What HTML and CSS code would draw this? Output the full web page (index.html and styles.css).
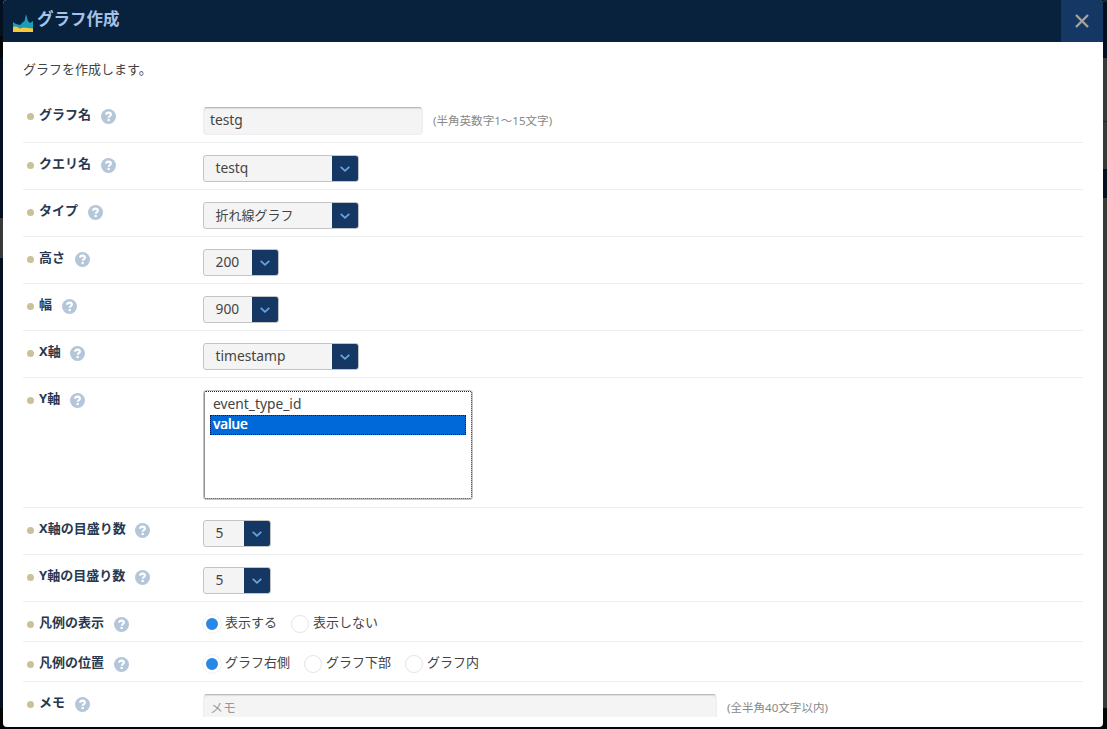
FILE: index.html
```
<!DOCTYPE html>
<html lang="ja">
<head>
<meta charset="utf-8">
<title>グラフ作成</title>
<link rel="stylesheet" href="styles.css">
</head>
<body>
<svg class="defs" width="0" height="0">
  <symbol id="help" viewBox="0 0 15 15">
    <circle cx="7.5" cy="7.5" r="7.5" fill="#b4c6da"/>
    <path d="M5.1 5.7C5.2 4.3 6.1 3.6 7.5 3.6c1.5 0 2.4.8 2.4 2 0 1.5-2.2 1.6-2.2 3.2" fill="none" stroke="#fff" stroke-width="2.100"/>
    <rect x="6.500" y="9.900" width="2.300" height="2.200" fill="#fff"/>
  </symbol>
  <symbol id="chev" viewBox="0 0 12 8">
    <path d="M1.700 1.800L6 5.800l4.300-4" fill="none" stroke="#66a5e2" stroke-width="1.800"/>
  </symbol>
</svg>
<div class="modal">
  <header class="head">
    <svg class="logo" width="20" height="18" viewBox="0 0 20 18">
      <path d="M0 8l3 2 4 1 3-3 1.500-1L13 0l2 7 2 2 3-2v11H0z" fill="#1a9dbd"/>
      <path d="M0 13l3-.5 4 2 4-1 4 .5 5 .5V18H0z" fill="#f7c93b"/>
    </svg>
    <h1 class="title">グラフ作成</h1>
    <button class="close"><svg width="14" height="14" viewBox="0 0 14 14"><path d="M1 1l12 12M13 1L1 13" stroke="#a7a29c" stroke-width="2.400"/></svg></button>
  </header>
  <main class="content">
    <p class="intro">グラフを作成します。</p>
    <div class="row row-name"><div class="label"><i class="dot"></i><span>グラフ名</span><svg class="help"><use href="#help"/></svg></div>
      <div class="field"><div class="input latin">testg</div><span class="note">(半角英数字1〜15文字)</span></div></div>
    <div class="row"><div class="label"><i class="dot"></i><span>クエリ名</span><svg class="help"><use href="#help"/></svg></div>
      <div class="select wide latin"><span>testq</span><b><svg class="chev"><use href="#chev"/></svg></b></div></div>
    <div class="row"><div class="label"><i class="dot"></i><span>タイプ</span><svg class="help"><use href="#help"/></svg></div>
      <div class="select wide"><span>折れ線グラフ</span><b><svg class="chev"><use href="#chev"/></svg></b></div></div>
    <div class="row"><div class="label"><i class="dot"></i><span>高さ</span><svg class="help"><use href="#help"/></svg></div>
      <div class="select size latin"><span>200</span><b><svg class="chev"><use href="#chev"/></svg></b></div></div>
    <div class="row"><div class="label"><i class="dot"></i><span>幅</span><svg class="help"><use href="#help"/></svg></div>
      <div class="select size latin"><span>900</span><b><svg class="chev"><use href="#chev"/></svg></b></div></div>
    <div class="row"><div class="label"><i class="dot"></i><span>X軸</span><svg class="help"><use href="#help"/></svg></div>
      <div class="select wide latin"><span>timestamp</span><b><svg class="chev"><use href="#chev"/></svg></b></div></div>
    <div class="row row-list"><div class="label"><i class="dot"></i><span>Y軸</span><svg class="help"><use href="#help"/></svg></div>
      <div class="listbox latin"><div class="option">event_type_id</div><div class="option selected">value</div></div></div>
    <div class="row"><div class="label"><i class="dot"></i><span>X軸の目盛り数</span><svg class="help"><use href="#help"/></svg></div>
      <div class="select tick latin"><span>5</span><b><svg class="chev"><use href="#chev"/></svg></b></div></div>
    <div class="row"><div class="label"><i class="dot"></i><span>Y軸の目盛り数</span><svg class="help"><use href="#help"/></svg></div>
      <div class="select tick latin"><span>5</span><b><svg class="chev"><use href="#chev"/></svg></b></div></div>
    <div class="row row-radio"><div class="label"><i class="dot"></i><span>凡例の表示</span><svg class="help"><use href="#help"/></svg></div>
      <div class="radios"><label><i class="radio on"></i>表示する</label><label><i class="radio"></i>表示しない</label></div></div>
    <div class="row row-radio"><div class="label"><i class="dot"></i><span>凡例の位置</span><svg class="help"><use href="#help"/></svg></div>
      <div class="radios"><label><i class="radio on"></i>グラフ右側</label><label><i class="radio"></i>グラフ下部</label><label><i class="radio"></i>グラフ内</label></div></div>
    <div class="row"><div class="label"><i class="dot"></i><span>メモ</span><svg class="help"><use href="#help"/></svg></div>
      <div class="field"><div class="input memo">メモ</div><span class="note">(全半角40文字以内)</span></div></div>
  </main>
</div>
</body>
</html>
```
FILE: styles.css
```
* { box-sizing: border-box; }
html, body { height: 729px; overflow: hidden; }
body {
  margin: 0;
  padding: 0 4px 2px 3px;
  font: 13px/20px "Noto Sans", "Noto Sans CJK JP", sans-serif;
  color: #444;
  background:
    linear-gradient(#222 0 2px, #04101f 2px 58px, #393939 58px 121px, #222 121px 122px, #393939 122px 169px, #04101f 169px 198px, #393939 198px 708px, #050505 708px) right / 4px 100% no-repeat,
    linear-gradient(#04101f 0 36px, #050505 36px 58px, #04101f 58px 218px, #393939 218px 258px, #04101f 258px 708px, #050505 708px) left / 3px 100% no-repeat,
    #060606;
}
.defs { position: absolute; }
.modal { height: 727px; display: flex; flex-direction: column; background: #fff; border-radius: 4px; overflow: hidden; }
.head { flex: none; height: 42px; display: flex; align-items: flex-start; background: #08213d; }
.logo { margin: 14px 0 0 10px; }
.title { flex: 1; margin: 8px 0 0 4px; font-size: 16.500px; line-height: 22px; font-weight: bold; color: #a3c3e8; }
.close { width: 42px; height: 42px; padding: 0; border: 0; background: #143863; display: flex; align-items: center; justify-content: center; }
.content { flex: none; height: 675px; padding: 0 20px; overflow: hidden; }
.intro { margin: 17px 0 15px; }
.row { display: flex; align-items: flex-start; height: 47px; border-bottom: 1px solid #ebeff2; }
.row-name { height: 49px; }
.row-list { height: 130px; }
.row-radio { height: 40px; }
.label { width: 180px; height: 20px; margin-top: 10px; padding-left: 4px; display: flex; align-items: center; color: #283850; font-weight: bold; }
.dot { width: 7px; height: 7px; margin: 4px 5px 0 0; border-radius: 50%; background: #c8c296; }
.help { width: 15px; height: 15px; margin: 4px 0 0 9.500px; }
.field { display: flex; margin-top: 12px; }
.row-name .field { margin-top: 13px; }
.latin { font-size: 13.800px; }
.input { width: 220px; height: 28px; padding: 2px 6px; border: 1px solid #eee; border-top-color: #bbb; border-radius: 4px; background: #f4f4f4; box-shadow: inset 0 1px 1px #ddd; }
.memo { width: 514px; color: #999; }
.note { margin: 4px 0 0 10px; font-size: 11.550px; color: #888; }
.select { height: 27px; margin-top: 12px; display: flex; border: 1px solid #c4c4c4; border-radius: 3px; background: #f4f4f4; overflow: hidden; }
.select span { flex: 1; padding: 2px 0 0 11.500px; white-space: nowrap; }
.select b { width: 26px; background: #143863; display: flex; align-items: center; justify-content: center; }
.chev { width: 12px; height: 8px; margin-top: 1px; }
.wide { width: 156px; }
.size { width: 76px; }
.tick { width: 68px; }
.listbox { width: 270px; height: 110px; margin-top: 12px; padding: 4px 6px; border: 1px solid #c4c4c4; border-radius: 3px; outline: 1px dotted #222; outline-offset: -2px; }
.option { height: 20px; padding-left: 3px; line-height: 18px; }
.selected { background: #0069d9; color: #fff; outline: 1px dotted #001c66; outline-offset: -1px; text-shadow: .4px 0 #fff; }
.radios { display: flex; gap: 14px; margin-top: 10px; }
.radios label { display: flex; height: 20px; }
.radio { width: 18px; height: 18px; margin: 3px 4px 0 0; border: 1px solid #e4e4e4; border-radius: 50%; }
.on { background: #2a87e5; border: 3px solid #fff; box-shadow: 0 0 0 1px #f2f2f2; }
```
